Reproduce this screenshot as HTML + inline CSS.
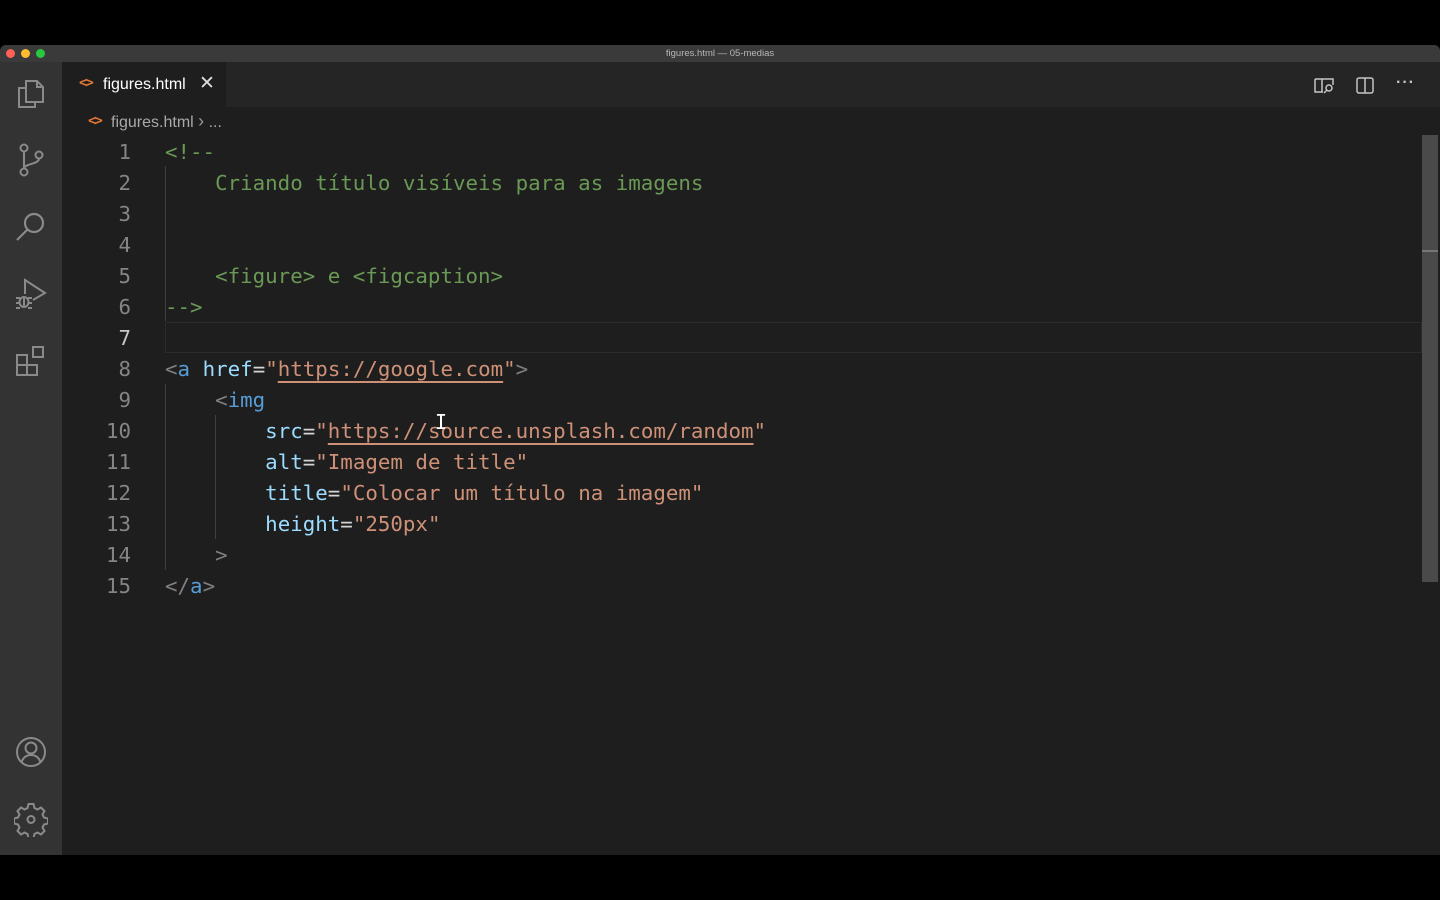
<!DOCTYPE html>
<html><head><meta charset="utf-8"><style>
*{margin:0;padding:0;box-sizing:border-box}
body{width:1440px;height:900px;background:#000;position:relative;overflow:hidden;font-family:"Liberation Sans",sans-serif}
.win{position:absolute;left:0;top:45px;width:1440px;height:810px;background:#1e1e1e;border-radius:6px 6px 0 0;overflow:hidden}
.title{position:absolute;left:0;top:0;width:1440px;height:17px;background:#3a3a3a;color:#b8b8b8;font-size:9.5px;text-align:center;line-height:17px}
.dot{position:absolute;top:4px;width:9px;height:9px;border-radius:50%}
.act{position:absolute;left:0;top:17px;width:62px;height:793px;background:#333333}
.act svg{position:absolute;left:14px}
.tabs{position:absolute;left:62px;top:17px;right:0;height:45px;background:#252526}
.tab{position:absolute;left:0;top:0;width:164px;height:45px;background:#1e1e1e;color:#fff;font-size:16px}
.code{position:absolute;left:0;top:2px;font-family:"DejaVu Sans Mono","Liberation Mono",monospace;font-size:20.8px}
.ln{position:absolute;width:131px;text-align:right;color:#858585;height:31px;line-height:31px}
.l{position:absolute;left:165px;height:31px;line-height:31px;white-space:pre}
.c{color:#6a9955}.g{color:#808080}.b{color:#569cd6}.a{color:#9cdcfe}.s{color:#ce9178}
.u{text-decoration:underline;text-decoration-color:#ce9178;text-underline-offset:5px}
.guide{position:absolute;width:1px;background:#404040}
.ic{position:absolute;font-family:"DejaVu Sans Mono",monospace;color:#e37933;font-weight:bold;letter-spacing:-2px}
</style></head><body>
<div class="win">
<div class="title">figures.html — 05-medias</div>
<div class="dot" style="left:6px;background:#fe5f57"></div>
<div class="dot" style="left:21px;background:#febc2e"></div>
<div class="dot" style="left:36px;background:#28c840"></div>
<div class="act">
<svg style="top:13px" width="34" height="36" viewBox="0 0 34 36" fill="none" stroke="#8a8a8a" stroke-width="2"><path d="M12 6h11l6 6v15H12z M23 6v6h6"/><path d="M12 13H5v19h16v-5"/></svg>
<svg style="top:80px" width="34" height="36" viewBox="0 0 34 36" fill="none" stroke="#8a8a8a" stroke-width="2"><circle cx="10" cy="6" r="3.5"/><circle cx="10" cy="30" r="3.5"/><circle cx="25" cy="13" r="3.5"/><path d="M10 9.5v17M25 16.5c0 6-15 5-15 10"/></svg>
<svg style="top:148px" width="34" height="36" viewBox="0 0 34 36" fill="none" stroke="#8a8a8a" stroke-width="2.2"><circle cx="20" cy="13" r="9"/><path d="M13.5 19.5L3 30"/></svg>
<svg style="top:214px" width="34" height="36" viewBox="0 0 34 36" fill="none" stroke="#8a8a8a" stroke-width="2"><path d="M11 18V4l20 13-12 7"/><ellipse cx="10" cy="26" rx="4.5" ry="5"/><path d="M2 22h4M2 27h4M2 32h4M14 22h4M14 27h4M14 32h4M10 21v10"/></svg>
<svg style="top:282px" width="34" height="36" viewBox="0 0 34 36" fill="none" stroke="#8a8a8a" stroke-width="2"><rect x="3" y="11" width="10" height="10"/><rect x="3" y="21" width="10" height="10"/><rect x="13" y="21" width="10" height="10"/><rect x="19" y="3" width="10" height="10"/></svg>
<svg style="top:672px" width="34" height="36" viewBox="0 0 34 36" fill="none" stroke="#8a8a8a" stroke-width="2"><circle cx="17" cy="18" r="14"/><circle cx="17" cy="14" r="5.5"/><path d="M7.5 28c2-5 5.5-7 9.5-7s7.5 2 9.5 7"/></svg>
<svg style="top:739px" width="34" height="36" viewBox="0 0 34 36" fill="none" stroke="#8a8a8a" stroke-width="2"><path d="M14.5 4h5l1 4 3 1.5 3.5-2 3.5 3.5-2 3.5 1.5 3 4 1v5l-4 1-1.5 3 2 3.5-3.5 3.5-3.5-2-3 1.5-1 4h-5l-1-4-3-1.5-3.5 2-3.5-3.5 2-3.5-1.5-3-4-1v-5l4-1 1.5-3-2-3.5 3.5-3.5 3.5 2 3-1.5z" transform="translate(0,-1)"/><circle cx="17" cy="18.5" r="3.5"/></svg>
</div>
<div class="tabs">
<div class="tab"><span class="ic" style="left:17px;top:13px;font-size:14px">&lt;&gt;</span><span style="position:absolute;left:41px;top:14px;font-weight:500">figures.html</span><span style="position:absolute;left:137px;top:10px;font-size:19px;color:#ddd">✕</span></div>
<svg style="position:absolute;left:1251px;top:14px" width="22" height="18" viewBox="0 0 22 18" fill="none" stroke="#c5c5c5" stroke-width="1.5"><path d="M2 3h18v6M2 3v13h8M9 3v13"/><circle cx="16" cy="12" r="3"/><path d="M14 14l-3 3"/></svg>
<svg style="position:absolute;left:1293px;top:14px" width="20" height="18" viewBox="0 0 20 18" fill="none" stroke="#c5c5c5" stroke-width="1.5"><rect x="2" y="2" width="16" height="15" rx="2"/><path d="M10 2v15"/></svg>
<span style="position:absolute;left:1334px;top:12px;color:#c5c5c5;font-size:16px;letter-spacing:1px;font-weight:bold">···</span>
</div>
<span class="ic" style="left:88px;top:68px;font-size:14px">&lt;&gt;</span>
<div style="position:absolute;left:111px;top:66px;font-size:16px;color:#a9a9a9">figures.html <span style="color:#999;font-size:18px">›</span> ...</div>
<div style="position:absolute;left:1422px;top:90px;width:16px;height:447px;background:#4a4a4a"></div>
<div style="position:absolute;left:1422px;top:205px;width:16px;height:2px;background:#777"></div>
</div>
<div style="position:absolute;left:165px;top:322px;width:1257px;height:31px;border:1px solid #2c2c2c"></div>
<div class="guide" style="left:165px;top:166px;height:155px"></div>
<div class="guide" style="left:165px;top:384px;height:186px"></div>
<div class="guide" style="left:215px;top:415px;height:124px"></div>
<div class="code">
<div class="ln" style="top:135px">1</div><div class="ln" style="top:166px">2</div><div class="ln" style="top:197px">3</div><div class="ln" style="top:228px">4</div><div class="ln" style="top:259px">5</div><div class="ln" style="top:290px">6</div><div class="ln" style="top:321px;color:#c6c6c6">7</div><div class="ln" style="top:352px">8</div><div class="ln" style="top:383px">9</div><div class="ln" style="top:414px">10</div><div class="ln" style="top:445px">11</div><div class="ln" style="top:476px">12</div><div class="ln" style="top:507px">13</div><div class="ln" style="top:538px">14</div><div class="ln" style="top:569px">15</div>
<div class="l c" style="top:135px">&lt;!--</div>
<div class="l c" style="top:166px">    Criando título visíveis para as imagens</div>
<div class="l c" style="top:259px">    &lt;figure&gt; e &lt;figcaption&gt;</div>
<div class="l c" style="top:290px">--&gt;</div>
<div class="l" style="top:352px"><span class="g">&lt;</span><span class="b">a</span> <span class="a">href</span><span style="color:#d4d4d4">=</span><span class="s">"<span class="u">https://google.com</span>"</span><span class="g">&gt;</span></div>
<div class="l" style="top:383px">    <span class="g">&lt;</span><span class="b">img</span></div>
<div class="l" style="top:414px">        <span class="a">src</span><span style="color:#d4d4d4">=</span><span class="s">"<span class="u">https://source.unsplash.com/random</span>"</span></div>
<div class="l" style="top:445px">        <span class="a">alt</span><span style="color:#d4d4d4">=</span><span class="s">"Imagem de title"</span></div>
<div class="l" style="top:476px">        <span class="a">title</span><span style="color:#d4d4d4">=</span><span class="s">"Colocar um título na imagem"</span></div>
<div class="l" style="top:507px">        <span class="a">height</span><span style="color:#d4d4d4">=</span><span class="s">"250px"</span></div>
<div class="l" style="top:538px">    <span class="g">&gt;</span></div>
<div class="l" style="top:569px"><span class="g">&lt;/</span><span class="b">a</span><span class="g">&gt;</span></div>
</div>
<div style="position:absolute;left:435px;top:410px;color:#fff;font-size:20px;font-family:'DejaVu Sans Mono',monospace">I</div>
</body></html>
